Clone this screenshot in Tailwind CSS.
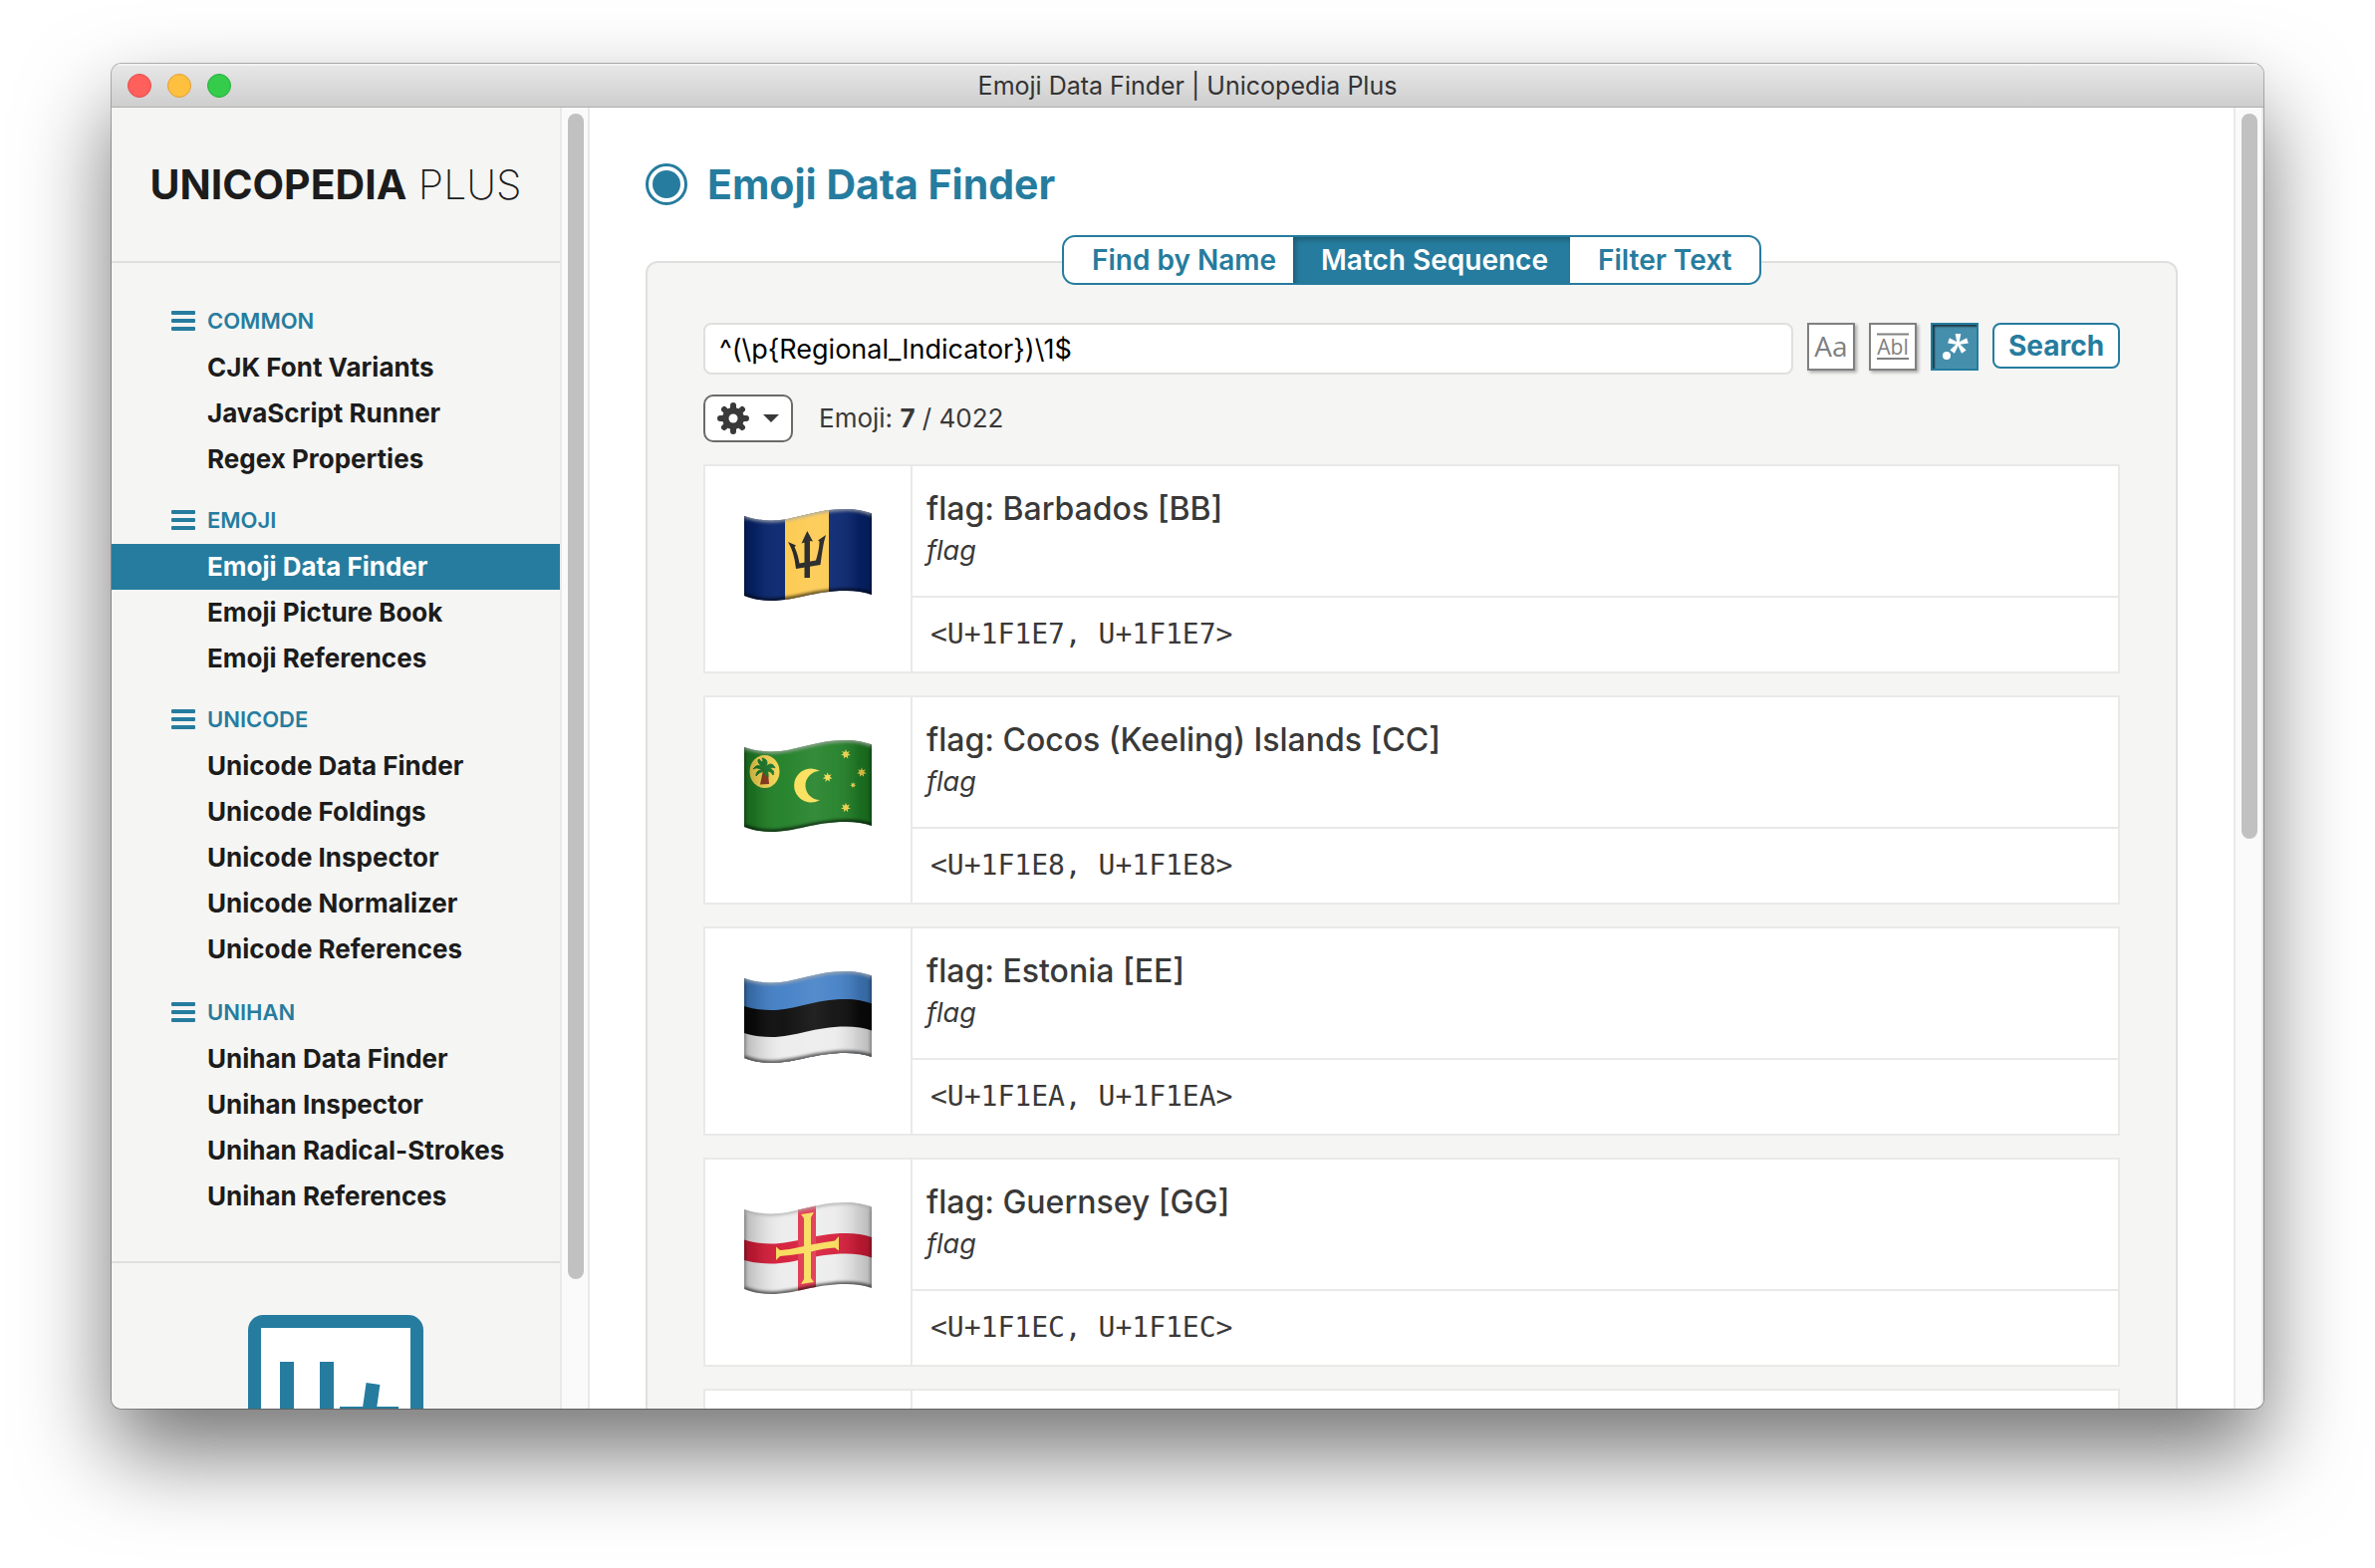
<!DOCTYPE html>
<html lang="en">
<head>
<meta charset="utf-8">
<meta name="viewport" content="width=device-width, initial-scale=1">
<title>Emoji Data Finder | Unicopedia Plus</title>
<script src="https://cdn.jsdelivr.net/npm/@tailwindcss/browser@4"></script>
</head>
<body class="flex h-screen flex-col bg-white px-28 pt-16 pb-40 font-[Inter,sans-serif] text-[#393939]">

<!-- Shared flag outline and shading -->
<svg class="absolute size-0" aria-hidden="true">
  <defs>
    <clipPath id="wave"><path d="M0 7C9 10 18 11.500 27 11.500C52 11.500 70 0 102 0C112 0 121 2 128 4.500V86C121 83.500 112 82 102 82C70 82 52 92 27 92C18 92 9 90.500 0 87Z"/></clipPath>
    <linearGradient id="fold">
      <stop offset="0" stop-color="#000" stop-opacity=".22"/>
      <stop offset=".08" stop-color="#000" stop-opacity=".14"/>
      <stop offset=".3" stop-color="#fff" stop-opacity=".04"/>
      <stop offset=".55" stop-color="#fff" stop-opacity=".1"/>
      <stop offset=".7" stop-color="#fff" stop-opacity=".06"/>
      <stop offset=".9" stop-color="#000" stop-opacity=".14"/>
      <stop offset="1" stop-color="#000" stop-opacity=".22"/>
    </linearGradient>
    <filter id="soft" x="-20%" y="-40%" width="140%" height="180%"><feGaussianBlur stdDeviation="1.800"/></filter>
    <g id="shade">
      <rect width="128" height="92" fill="url(#fold)"/>
      <g fill="none" filter="url(#soft)">
        <path d="M0 7C9 10 18 11.500 27 11.500C52 11.500 70 0 102 0C112 0 121 2 128 4.500" stroke="#aaa" stroke-opacity=".75" stroke-width="4"/>
        <path d="M0 87C9 90.500 18 92 27 92C52 92 70 82 102 82C112 82 121 83.500 128 86" stroke="#000" stroke-opacity=".6" stroke-width="5"/>
        <path d="M0 7V87M128 4V86" stroke="#000" stroke-opacity=".35" stroke-width="3"/>
      </g>
    </g>
    <path id="star" d="M0-5L1-2.100L3.900-3.100L2.300-.5L4.900 1.100L1.900 1.500L2.200 4.500L0 2.400L-2.200 4.500L-1.900 1.500L-4.900 1.100L-2.300-.5L-3.900-3.100L-1-2.100Z"/>
  </defs>
</svg>

<div class="flex min-h-0 flex-1 flex-col overflow-hidden rounded-[10px] bg-white shadow-[0_0_0_1px_rgba(0,0,0,0.28),0_44px_90px_rgba(0,0,0,0.55)]">

  <header class="grid h-11 shrink-0 grid-cols-[1fr_auto_1fr] items-center border-b border-[#adadad] bg-linear-to-b from-[#e8e8e8] to-[#cecece] px-4 shadow-[inset_0_2px_0_#f2f2f2]">
    <div class="flex gap-4">
      <button aria-label="Close" class="size-6 rounded-full border border-[#e5484a] bg-[#ff605c]"></button>
      <button aria-label="Minimize" class="size-6 rounded-full border border-[#dfa032] bg-[#ffbf3f]"></button>
      <button aria-label="Zoom" class="size-6 rounded-full border border-[#26ae3a] bg-[#35cb4b]"></button>
    </div>
    <div class="text-[25px] leading-8 text-[#333]">Emoji Data Finder | Unicopedia Plus</div>
  </header>

  <div class="flex min-h-0 flex-1">

    <aside class="flex w-[450px] shrink-0 flex-col overflow-hidden bg-[#f5f5f4] text-[#1c1c1c]">
      <div class="flex h-[156px] shrink-0 items-center justify-center border-b-2 border-[#dfdfde] text-[41px] leading-[46px] whitespace-nowrap">
        <div><span class="font-bold">UNICOPEDIA</span> <span class="font-extralight">PLUS</span></div>
      </div>

      <nav class="shrink-0 border-b-2 border-[#dfdfde] pt-5 pb-[42px] text-[26px] leading-[46px] font-bold">
        <section class="pt-[14px]">
          <h2 class="flex h-12 items-center gap-3 pl-[60px] text-[22px] font-semibold text-[#267c9e]">
            <svg class="h-5 w-6" viewBox="0 0 24 20" fill="currentColor"><rect width="24" height="4" rx="1"/><rect y="8" width="24" height="4" rx="1"/><rect y="16" width="24" height="4" rx="1"/></svg>COMMON</h2>
          <ul>
            <li><a href="#" class="block pl-24">CJK Font Variants</a></li>
            <li><a href="#" class="block pl-24">JavaScript Runner</a></li>
            <li><a href="#" class="block pl-24">Regex Properties</a></li>
          </ul>
        </section>
        <section class="pt-[14px]">
          <h2 class="flex h-12 items-center gap-3 pl-[60px] text-[22px] font-semibold text-[#267c9e]">
            <svg class="h-5 w-6" viewBox="0 0 24 20" fill="currentColor"><rect width="24" height="4" rx="1"/><rect y="8" width="24" height="4" rx="1"/><rect y="16" width="24" height="4" rx="1"/></svg>EMOJI</h2>
          <ul>
            <li><a href="#" aria-current="page" class="block bg-[#267c9e] pl-24 text-white">Emoji Data Finder</a></li>
            <li><a href="#" class="block pl-24">Emoji Picture Book</a></li>
            <li><a href="#" class="block pl-24">Emoji References</a></li>
          </ul>
        </section>
        <section class="pt-[14px] pb-0.5">
          <h2 class="flex h-12 items-center gap-3 pl-[60px] text-[22px] font-semibold text-[#267c9e]">
            <svg class="h-5 w-6" viewBox="0 0 24 20" fill="currentColor"><rect width="24" height="4" rx="1"/><rect y="8" width="24" height="4" rx="1"/><rect y="16" width="24" height="4" rx="1"/></svg>UNICODE</h2>
          <ul>
            <li><a href="#" class="block pl-24">Unicode Data Finder</a></li>
            <li><a href="#" class="block pl-24">Unicode Foldings</a></li>
            <li><a href="#" class="block pl-24">Unicode Inspector</a></li>
            <li><a href="#" class="block pl-24">Unicode Normalizer</a></li>
            <li><a href="#" class="block pl-24">Unicode References</a></li>
          </ul>
        </section>
        <section class="pt-[14px]">
          <h2 class="flex h-12 items-center gap-3 pl-[60px] text-[22px] font-semibold text-[#267c9e]">
            <svg class="h-5 w-6" viewBox="0 0 24 20" fill="currentColor"><rect width="24" height="4" rx="1"/><rect y="8" width="24" height="4" rx="1"/><rect y="16" width="24" height="4" rx="1"/></svg>UNIHAN</h2>
          <ul>
            <li><a href="#" class="block pl-24">Unihan Data Finder</a></li>
            <li><a href="#" class="block pl-24">Unihan Inspector</a></li>
            <li><a href="#" class="block pl-24">Unihan Radical-Strokes</a></li>
            <li><a href="#" class="block pl-24">Unihan References</a></li>
          </ul>
        </section>
      </nav>

      <div class="flex shrink-0 justify-center pt-[52px]">
        <svg class="size-44" viewBox="0 0 176 176" role="img" aria-label="Unicopedia Plus logo">
          <rect width="176" height="176" rx="15" fill="#267c9e"/>
          <rect x="13" y="13" width="150" height="150" fill="#fff"/>
          <g fill="none" stroke="#267c9e" stroke-width="14">
            <path d="M39 47V104a20 20 0 0 0 40 0V47"/>
            <path d="M125.500 69L117 129M92 99H151"/>
          </g>
        </svg>
      </div>
    </aside>

    <div class="w-[30px] shrink-0 border-x-2 border-[#e9e9e9] bg-[#fafafa] py-1.5 pr-1 pl-1.5">
      <div class="h-[calc(100%-124px)] rounded-full bg-[#c1c1c1]"></div>
    </div>

    <main class="min-w-0 flex-1 overflow-hidden px-14 pt-14">
      <h1 class="flex h-[42px] items-center gap-5 text-[41px] leading-[42px] font-bold text-[#267c9e]">
        <svg class="size-[42px]" viewBox="0 0 42 42" aria-hidden="true"><circle cx="21" cy="21" r="19.500" fill="#fff" stroke="#267c9e" stroke-width="3"/><circle cx="21" cy="21" r="14" fill="#267c9e"/></svg>
        Emoji Data Finder
      </h1>

      <section class="mt-14 rounded-xl border-2 border-[#dfdfde] bg-[#f5f5f4] px-14 pb-14">
        <div role="tablist" class="-mt-7 flex justify-center">
          <div class="flex h-[50px] overflow-hidden rounded-[13px] border-2 border-[#267c9e] bg-white text-[28px] leading-[46px] font-semibold text-[#267c9e]">
            <button role="tab" aria-selected="false" class="w-[230px] pl-7 text-left">Find by Name</button>
            <button role="tab" aria-selected="true" class="w-[278px] bg-[#267c9e] pl-7 text-left text-white shadow-[inset_3px_3px_5px_rgba(0,0,0,0.25)]">Match Sequence</button>
            <button role="tab" aria-selected="false" class="w-[190px] pl-7 text-left">Filter Text</button>
          </div>
        </div>

        <form class="mt-[38px] flex items-start gap-[14px]">
          <input type="text" aria-label="Search pattern" value="^(\p{Regional_Indicator})\1$" class="h-[52px] min-w-0 flex-1 rounded-lg border-2 border-[#dfdfde] bg-white px-[14px] text-[27px] text-black">
          <button type="button" aria-label="Case sensitive" aria-pressed="false" class="size-12 border-2 border-[#808080] bg-white shadow-[2px_2px_3px_rgba(0,0,0,0.3)]">
            <svg class="size-11" viewBox="2 2 44 44"><text x="24" y="34" text-anchor="middle" fill="#808080" class="font-['Open_Sans',sans-serif] text-[28px]">Aa</text></svg>
          </button>
          <button type="button" aria-label="Whole word" aria-pressed="false" class="size-12 border-2 border-[#808080] bg-white shadow-[2px_2px_3px_rgba(0,0,0,0.3)]">
            <svg class="size-11" viewBox="2 2 44 44"><path d="M8 11.500H40M8 36H40" stroke="#808080" stroke-width="2"/><text x="24" y="32" text-anchor="middle" fill="#808080" class="font-['Open_Sans',sans-serif] text-[21px]">Abl</text></svg>
          </button>
          <button type="button" aria-label="Regular expression" aria-pressed="true" class="size-12 border-2 border-[#267c9e] bg-[#468fac] shadow-[inset_2px_2px_2px_rgba(0,0,0,0.6)]">
            <svg class="size-11" viewBox="2 2 44 44" fill="#fff"><circle cx="16" cy="33" r="4"/><g transform="translate(27.500 21)"><path id="arm" d="M-2.800-10H2.800L1 0H-1Z"/><use href="#arm" transform="rotate(72)"/><use href="#arm" transform="rotate(144)"/><use href="#arm" transform="rotate(216)"/><use href="#arm" transform="rotate(288)"/></g></svg>
          </button>
          <button type="submit" class="h-[46px] w-32 rounded-lg border-2 border-[#267c9e] bg-white text-[28px] leading-[40px] font-bold text-[#267c9e]">Search</button>
        </form>

        <div class="mt-5 flex items-center gap-[26px]">
          <button type="button" aria-label="Options" class="flex h-12 w-[90px] items-center gap-[14px] rounded-[10px] border-2 border-[#6a6a6a] bg-white pl-3">
            <svg class="size-8" viewBox="-16 -16 32 32" fill="#393939"><g stroke="#393939" stroke-width="6" stroke-linecap="round"><path d="M0-9V-13M0 9V13M-9 0H-13M9 0H13M-7-7L-9-9M7-7L9-9M-7 7L-9 9M7 7L9 9"/></g><circle r="11"/><circle r="4.500" fill="#fff"/></svg>
            <svg class="h-2 w-4" viewBox="0 0 16 8" fill="#393939"><path d="M0 0H16L8 8Z"/></svg>
          </button>
          <p class="text-[26px] leading-8">Emoji: <b>7</b> / 4022</p>
        </div>

        <div class="mt-[22px] flex flex-col gap-[22px]">
          <table class="w-full table-fixed border-separate border-spacing-0 border-2 border-[#e9e9e8] bg-white text-left">
            <tr>
              <td rowspan="2" class="w-[208px] border-r-2 border-[#e9e9e8] p-0 pt-[43px] align-top">
                <svg class="mx-auto h-[92px] w-32" viewBox="0 0 128 92" role="img" aria-label="Flag of Barbados">
                  <g clip-path="url(#wave)">
                    <rect width="128" height="92" fill="#06246f"/><rect x="41" width="44" height="92" fill="#fdc94c"/>
                    <g fill="#1c1c1c"><path d="M63.300 22L69 32.500L66 32V69H60.500V33.500L57.500 34.500Z"/><path d="M44 33L52 36.500L50.500 38C53 43 54.500 49 55.500 54.500L72 51.500C74 45 75.500 38 75.500 32.500L74 31.500L82 26C79 35 78 46 76.500 56L52 60C51 52 49.500 42 44 33Z"/></g>
                    <use href="#shade"/>
                  </g>
                </svg>
              </td>
              <td class="h-[132px] border-b-2 border-[#e9e9e8] py-0 pr-4 pl-[14px]">
                <div class="text-[32px] leading-10 font-medium">flag: Barbados [BB]</div>
                <div class="text-[27px] leading-[44px] italic">flag</div>
              </td>
            </tr>
            <tr><td class="h-[74px] py-0 pr-4 pl-[18px] font-['DejaVu_Sans_Mono',monospace] text-[28px] leading-8">&lt;U+1F1E7, U+1F1E7&gt;</td></tr>
          </table>

          <table class="w-full table-fixed border-separate border-spacing-0 border-2 border-[#e9e9e8] bg-white text-left">
            <tr>
              <td rowspan="2" class="w-[208px] border-r-2 border-[#e9e9e8] p-0 pt-[43px] align-top">
                <svg class="mx-auto h-[92px] w-32" viewBox="0 0 128 92" role="img" aria-label="Flag of Cocos (Keeling) Islands">
                  <g clip-path="url(#wave)">
                    <rect width="128" height="92" fill="#1f7f25"/>
                    <ellipse cx="20.500" cy="31.500" rx="15" ry="16.500" fill="#f3d450"/>
                    <path d="M19 30L24 33L25 44L16 44.500Z" fill="#86351a"/>
                    <path d="M20 29C15 24 12 25 9 29C12 27 15 28 18 30C13 30 12 33 12 36C15 32 18 32 20 31C20 34 22 36 24 37C24 34 24 32 23 31C26 31 28 33 29 35C31 31 28 29 25 28C28 27 30 27 31 28C29 23 25 23 22 27C24 22 23 19 18 18C20 21 18 24 15 19C12 21 16 25 20 29Z" fill="#19762a" stroke="#19762a"/>
                    <path d="M76 31A17 17 0 1 0 76 60A14.500 14.500 0 1 1 76 31Z" fill="#fbdf55"/>
                    <g fill="#f6d94f"><use href="#star" x="102" y="14"/><use href="#star" x="83.700" y="37.300"/><use href="#star" x="118" y="32.300"/><use href="#star" x="102" y="67.700"/><use href="#star" transform="translate(109.300 45) scale(.6)"/></g>
                    <use href="#shade"/>
                  </g>
                </svg>
              </td>
              <td class="h-[132px] border-b-2 border-[#e9e9e8] py-0 pr-4 pl-[14px]">
                <div class="text-[32px] leading-10 font-medium">flag: Cocos (Keeling) Islands [CC]</div>
                <div class="text-[27px] leading-[44px] italic">flag</div>
              </td>
            </tr>
            <tr><td class="h-[74px] py-0 pr-4 pl-[18px] font-['DejaVu_Sans_Mono',monospace] text-[28px] leading-8">&lt;U+1F1E8, U+1F1E8&gt;</td></tr>
          </table>

          <table class="w-full table-fixed border-separate border-spacing-0 border-2 border-[#e9e9e8] bg-white text-left">
            <tr>
              <td rowspan="2" class="w-[208px] border-r-2 border-[#e9e9e8] p-0 pt-[43px] align-top">
                <svg class="mx-auto h-[92px] w-32" viewBox="0 0 128 92" role="img" aria-label="Flag of Estonia">
                  <g clip-path="url(#wave)">
                    <rect width="128" height="92" fill="#427fc6"/>
                    <path d="M0 35C9 38 18 39 27 39C52 39 70 28 102 28C112 28 121 30 128 32.500V92H0Z" fill="#0a0a0a"/>
                    <path d="M0 62C9 65 18 66 27 66C52 66 70 55.500 102 55.500C112 55.500 121 57 128 59.500V92H0Z" fill="#ececec"/>
                    <use href="#shade"/>
                  </g>
                </svg>
              </td>
              <td class="h-[132px] border-b-2 border-[#e9e9e8] py-0 pr-4 pl-[14px]">
                <div class="text-[32px] leading-10 font-medium">flag: Estonia [EE]</div>
                <div class="text-[27px] leading-[44px] italic">flag</div>
              </td>
            </tr>
            <tr><td class="h-[74px] py-0 pr-4 pl-[18px] font-['DejaVu_Sans_Mono',monospace] text-[28px] leading-8">&lt;U+1F1EA, U+1F1EA&gt;</td></tr>
          </table>

          <table class="w-full table-fixed border-separate border-spacing-0 border-2 border-[#e9e9e8] bg-white text-left">
            <tr>
              <td rowspan="2" class="w-[208px] border-r-2 border-[#e9e9e8] p-0 pt-[43px] align-top">
                <svg class="mx-auto h-[92px] w-32" viewBox="0 0 128 92" role="img" aria-label="Flag of Guernsey">
                  <g clip-path="url(#wave)">
                    <rect width="128" height="92" fill="#ececec"/>
                    <path d="M0 37.500C9 40.500 18 41.500 27 41.500C52 41.500 70 31 102 31C112 31 121 32.500 128 35V55.500C121 53 112 51.500 102 51.500C70 51.500 52 61.500 27 61.500C18 61.500 9 60.500 0 58Z" fill="#d51b38"/>
                    <rect x="54" width="18" height="92" fill="#e0304b"/>
                    <path d="M57 12L70 10L67 15V42.500Q80 40 91 38.500L95 34V48.500L91 45.500Q80 46 67 49.500V76L70 80L57 82L60 77V51Q48 53 36 54L32 58V44.500L36 48Q48 47 60 44V16Z" fill="#f8db5a"/>
                    <use href="#shade"/>
                  </g>
                </svg>
              </td>
              <td class="h-[132px] border-b-2 border-[#e9e9e8] py-0 pr-4 pl-[14px]">
                <div class="text-[32px] leading-10 font-medium">flag: Guernsey [GG]</div>
                <div class="text-[27px] leading-[44px] italic">flag</div>
              </td>
            </tr>
            <tr><td class="h-[74px] py-0 pr-4 pl-[18px] font-['DejaVu_Sans_Mono',monospace] text-[28px] leading-8">&lt;U+1F1EC, U+1F1EC&gt;</td></tr>
          </table>

          <table class="w-full table-fixed border-separate border-spacing-0 border-2 border-[#e9e9e8] bg-white text-left">
            <tr>
              <td rowspan="2" class="w-[208px] border-r-2 border-[#e9e9e8] p-0"></td>
              <td class="h-[132px] border-b-2 border-[#e9e9e8] p-0"></td>
            </tr>
            <tr><td class="h-[74px] p-0"></td></tr>
          </table>
        </div>
      </section>
    </main>

    <div class="w-[30px] shrink-0 border-x-2 border-[#e9e9e9] bg-[#fafafa] py-1.5 pr-1 pl-1.5">
      <div class="h-[calc(100%-566px)] rounded-full bg-[#c1c1c1]"></div>
    </div>
  </div>
</div>
</body>
</html>
